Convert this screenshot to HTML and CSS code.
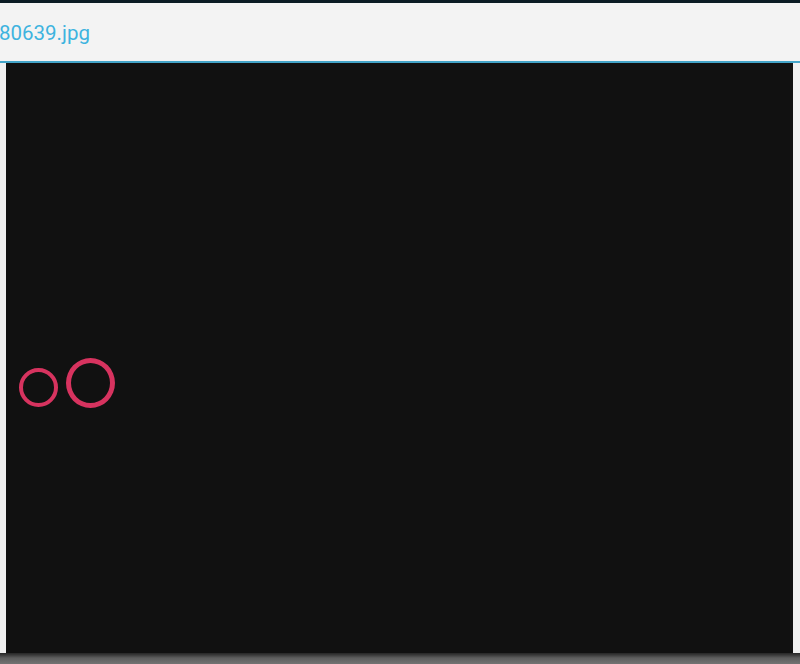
FILE: index.html
```html
<!DOCTYPE html>
<html>
<head>
<meta charset="utf-8">
<link rel="stylesheet" href="styles.css">
</head>
<body>
<div class="topbar"></div>
<div class="header"><span class="title">80639.jpg</span></div>
<div class="rule"></div>
<div class="main">
  <div class="side side-left"></div>
  <div class="viewer">
    <div class="rings">
      <div class="ring ring-small"></div>
      <div class="ring ring-large"></div>
    </div>
  </div>
  <div class="side side-right"></div>
</div>
<div class="bottom"></div>
</body>
</html>
```
FILE: styles.css
```css
html, body {
  margin: 0;
  padding: 0;
}
body {
  width: 800px;
  height: 664px;
  overflow: hidden;
  background: #f2f2f2;
  font-family: Roboto, "Liberation Sans", sans-serif;
  display: flex;
  flex-direction: column;
}
.topbar {
  height: 3px;
  background: #0b1b24;
  flex: none;
}
.header {
  height: 58px;
  flex: none;
  background: #f3f3f3;
  display: flex;
  align-items: center;
}
.title {
  color: #3eb3df;
  font-size: 20.5px;
  margin-left: -1px;
  padding-top: 2px;
}
.rule {
  height: 2px;
  flex: none;
  background: #44a5c9;
}
.main {
  flex: none;
  height: 590px;
  display: flex;
}
.side {
  background: #f0f0f0;
}
.side-left { width: 6px; }
.side-right { width: 7px; }
.viewer {
  flex: 1;
  background: #111111;
}
.rings {
  display: flex;
  align-items: flex-start;
  gap: 8px;
  padding-top: 295px;
  padding-left: 13px;
}
.ring {
  box-sizing: border-box;
  border-radius: 50%;
  border: 5px solid #d7335f;
}
.ring-small {
  width: 39px;
  height: 39px;
  margin-top: 10px;
  border-width: 4.5px;
}
.ring-large {
  width: 49px;
  height: 50px;
}
.bottom {
  flex: none;
  height: 11px;
  background: linear-gradient(#262626 0px, #3a3a3a 2px, #5e5e5e 5px, #737373 11px);
}
```
